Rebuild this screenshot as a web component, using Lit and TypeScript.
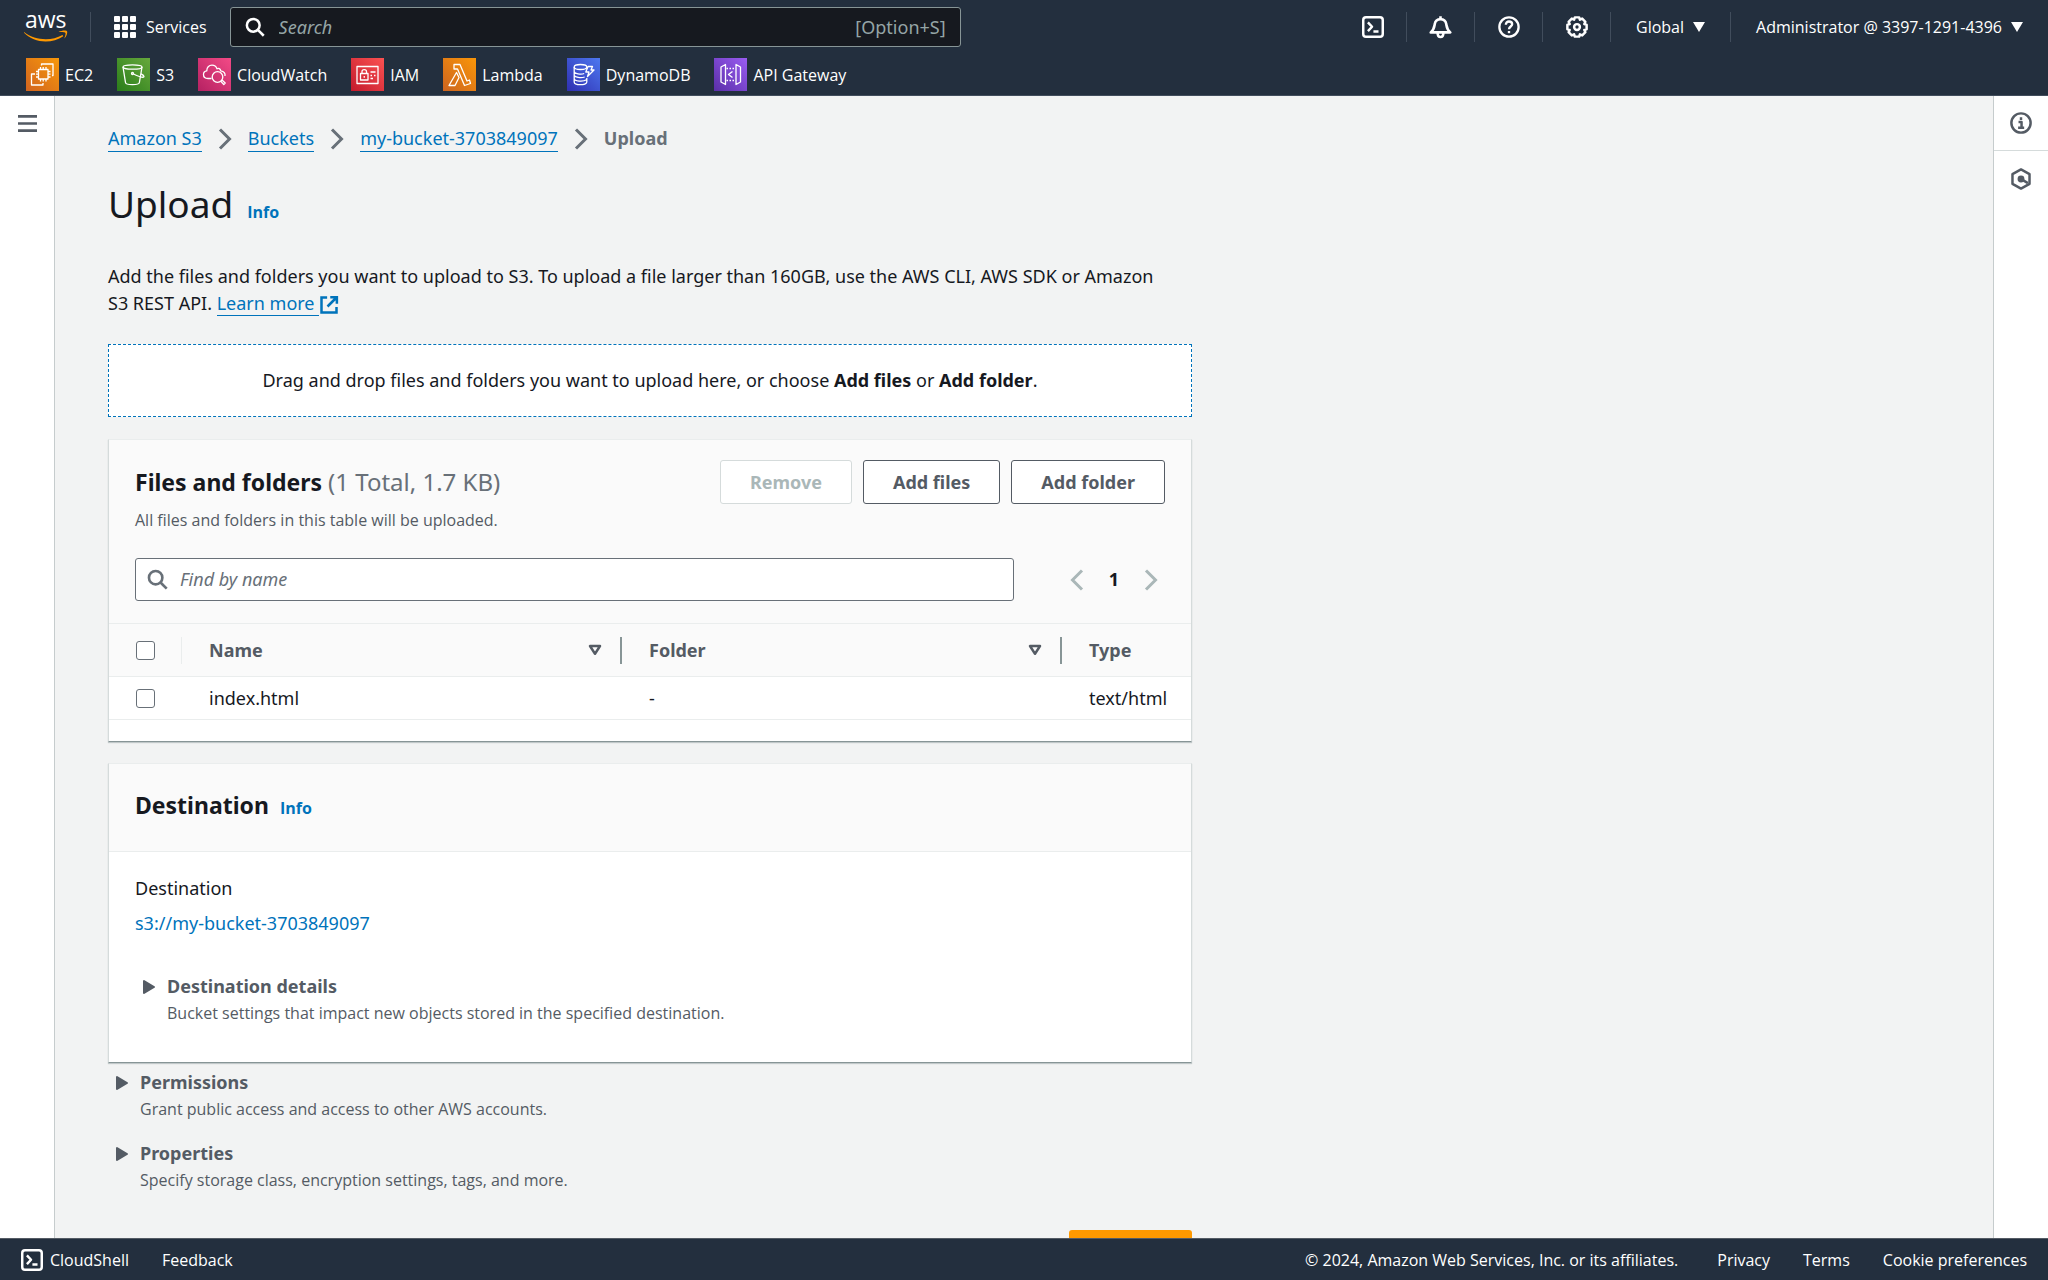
import { LitElement, html, css, svg } from "lit";
import { customElement, property } from "lit/decorators.js";

/* ---------- shared styles ---------- */

const base = css`
  :host {
    display: block;
    box-sizing: border-box;
  }
  *,
  *::before,
  *::after {
    box-sizing: border-box;
  }
  button,
  input {
    font: inherit;
    color: inherit;
    margin: 0;
  }
  button {
    background: none;
    border: 0;
    padding: 0;
    cursor: pointer;
  }
  a {
    color: #0073bb;
    text-decoration: none;
  }
  svg {
    display: block;
    flex: none;
  }
  h1,
  h2,
  p {
    margin: 0;
  }
  .small {
    font-family: "Open Sans", "Noto Sans", sans-serif;
    font-size: 16px;
  }
`;

/* ---------- icons ---------- */

const stroke = (size: number, body: unknown, width = 2) => html`
  <svg width=${size} height=${size} viewBox="0 0 16 16" fill="none" stroke="currentColor" stroke-width=${width}
    stroke-linejoin="round" aria-hidden="true">${body}</svg>
`;

const icons = {
  search: (size: number) => stroke(size, svg`<circle cx="6.6" cy="6.6" r="5.1"/><path d="M10.3 10.3 15 15"/>`),
  shell: (size: number) =>
    stroke(size, svg`<rect x=".9" y=".9" width="14.2" height="14.2" rx="2"/><path d="M4.3 4.6 7.3 7.8 4.3 11M8.3 11.2H12"/>`, 1.8),
  bell: (size: number) =>
    stroke(size, svg`<path d="M1.2 11.4C3.6 9.4 3.6 8 4 5.6 4.4 3.2 6 2.3 8 2.3s3.6.9 4 3.3c.4 2.4.4 3.8 2.8 5.8z"/><path d="M8 .2v2.2M6 11.6c0 2.2.8 3 2 3s2-.8 2-3"/>`, 1.8),
  help: (size: number) =>
    stroke(size, svg`<circle cx="8" cy="8" r="7"/><path d="M5.7 6.3C5.7 4.9 6.7 4 8 4s2.3.8 2.3 2c0 1.6-2.3 1.7-2.3 3.6"/><path d="M8 10.9v1.6"/>`, 1.7),
  gear: (size: number) =>
    stroke(size, svg`<path d="M6.4 1h3.2l.5 1.7 1.7-.8 2.3 2.3-.8 1.7 1.7.5v3.2l-1.7.5.8 1.7-2.3 2.3-1.7-.8L9.6 15H6.4l-.5-1.7-1.7.8-2.3-2.3.8-1.7L1 9.6V6.4l1.7-.5-.8-1.7 2.3-2.3 1.7.8z"/><circle cx="8" cy="8" r="2.1"/>`, 1.8),
  info: (size: number) =>
    stroke(size, svg`<circle cx="8" cy="8" r="7"/><path d="M6.2 7.3H8.4V11.3M5.9 11.5H10.3M8 3.8v2"/>`, 1.8),
  hex: (size: number) =>
    stroke(size, svg`<path d="M8 1 14.2 4.5V11.5L8 15 1.8 11.5V4.5z"/><circle cx="8" cy="8" r="1.6" fill="currentColor"/><path d="M8.5 8.3 13 11"/>`, 1.8),
  external: (size: number) =>
    stroke(size, svg`<path d="M6.5 2H2V14H14V9.5M9 1.7H14.3V7M14 2 6.8 9.2" stroke-linejoin="miter"/>`, 2),
  menu: (size: number) => stroke(size, svg`<path d="M0 2H16M0 8H16M0 14H16"/>`, 2.2),
  grid: (size: number) => html`
    <svg width=${size} height=${size} viewBox="0 0 22 22" fill="currentColor" aria-hidden="true">
      ${[0, 8, 16].map((y) => [0, 8, 16].map((x) => svg`<rect x=${x} y=${y} width="6" height="6" rx="1"/>`))}
    </svg>
  `,
  chevron: (dir: "left" | "right") => html`
    <svg width="14" height="22" viewBox="0 0 14 22" fill="none" stroke="currentColor" stroke-width="3" aria-hidden="true">
      <path d=${dir === "right" ? "M2 1.5 11.5 11 2 20.5" : "M12 1.5 2.5 11 12 20.5"} />
    </svg>
  `,
  caretDown: () => html`
    <svg width="12" height="10" viewBox="0 0 12 10" fill="currentColor" aria-hidden="true"><path d="M0 0h12L6 10z" /></svg>
  `,
  caretRight: () => html`
    <svg width="12" height="16" viewBox="0 0 12 16" fill="currentColor" stroke="currentColor" stroke-width="2" stroke-linejoin="round" aria-hidden="true">
      <path d="M1 2v12l10-6z" />
    </svg>
  `,
  sort: () => html`
    <svg width="14" height="12" viewBox="0 0 14 12" fill="none" stroke="currentColor" stroke-width="2.5" stroke-linejoin="round" aria-hidden="true">
      <path d="M2 2h10L7 9.8z" />
    </svg>
  `,
};

const serviceArt: Record<string, { from: string; to: string; art: unknown }> = {
  ec2: {
    from: "#d2641f",
    to: "#f7980a",
    art: svg`<path d="M12.500 11.500h9.500v9.500H12.500zM14.5 9V11.500M17.2 9V11.500M20 9V11.500M14.5 21v2.500M17.2 21v2.500M20 21v2.500M10 13.500H12.500M10 16.200H12.500M10 19H12.500M22 13.500h2.500M22 16.200h2.500M22 19h2.500"/><path d="M15.500 7.500V6H27V17.500H26M9 16H5.500V27H17V25"/>`,
  },
  s3: {
    from: "#2a7d1a",
    to: "#66a83c",
    art: svg`<ellipse cx="15.5" cy="9" rx="9.5" ry="2.2"/><path d="M6 9 8.5 24.5C8.8 27.3 22 27.3 22.4 24.5L25 9"/><circle cx="15.5" cy="15.5" r="1"/><path d="M16.5 16C20 18 27 20.5 27 18.5 27 17.3 25 16.4 23.8 15.8"/>`,
  },
  cloudwatch: {
    from: "#b52162",
    to: "#f34a86",
    art: svg`<path d="M13.5 20.5H10C7 20.5 5.5 18.5 5.5 16.5 5.5 14.5 7 13 8.8 12.8 8.6 9.5 11 7.2 14 7.2 16.5 7.2 18.3 8.8 19 10.8 20.3 9.8 22.5 10.5 22.7 12.8 25.5 13.3 27.5 15 27 18"/><circle cx="19.5" cy="19" r="5.3"/><path d="M22.8 23.3 25.8 26.6 27.2 25 24 22"/>`,
  },
  iam: {
    from: "#c31a2c",
    to: "#fb5252",
    art: svg`<path d="M6 8.5H27V25.5H6zM9.5 15.5h7.5v6.5H9.5zM11 15.5V13.5C11 11 15.5 11 15.5 13.5V15.5M13.25 18v1.7M19.5 14h5M19.5 17.5h1.5M23 17.5h1.5M19.5 20.5h2.5"/>`,
  },
  lambda: {
    from: "#cc6420",
    to: "#fa9608",
    art: svg`<path d="M11 6.5H17L24 23 26.5 22 27.5 25.5 21.5 27.5 14.5 11H11zM13.5 14.5 16 19.5 12 27.5H6z"/>`,
  },
  dynamo: {
    from: "#2f2fb0",
    to: "#4d78f0",
    art: svg`<ellipse cx="13.5" cy="9" rx="6.3" ry="2.5"/><path d="M7.2 9v15c0 3.6 12.6 3.6 12.6 0V20M7.2 13.5c0 2.5 7 3.2 10 2M7.2 17c0 2.5 7 3.2 10.5 2M7.2 20.5c0 3 9 3.5 12.3 1.3M21 8.5H25.5L24 12H27L20.5 18.5 22 14H18.8z"/>`,
  },
  api: {
    from: "#5a2fa8",
    to: "#9a5cf2",
    art: svg`<path d="M11.5 6.5V26.5L7 24V9zM22 6.5V26.5L26.5 24V9z"/><path d="M12.5 10.5H21M12.5 22.5H21" stroke-dasharray="1.5 1.5"/><path d="M18.5 13.5 14.5 16.5 18.5 19.5"/>`,
  },
};

const favourites = [
  { id: "ec2", name: "EC2" },
  { id: "s3", name: "S3" },
  { id: "cloudwatch", name: "CloudWatch" },
  { id: "iam", name: "IAM" },
  { id: "lambda", name: "Lambda" },
  { id: "dynamo", name: "DynamoDB" },
  { id: "api", name: "API Gateway" },
];

/* ---------- top navigation ---------- */

@customElement("top-nav")
export class TopNav extends LitElement {
  static styles = [
    base,
    css`
      :host {
        background: #232f3e;
        color: #fff;
        font-family: "Open Sans", "Noto Sans", sans-serif;
        font-size: 16px;
        line-height: 20px;
        border-bottom: 1px solid #414d5c;
      }
      .bar {
        display: flex;
        align-items: center;
        height: 54px;
        padding: 0 25px 0 24px;
      }
      .logo {
        padding-right: 22px;
      }
      .logo-art {
        overflow: visible;
      }
      .logo-text {
        font-size: 23px;
      }
      .rule {
        width: 1px;
        height: 30px;
        background: #414d5c;
        flex: none;
      }
      .services {
        display: flex;
        align-items: center;
        gap: 10px;
        padding: 0 23px;
      }
      .search {
        display: flex;
        align-items: center;
        gap: 14px;
        flex: 0 1 731px;
        min-width: 200px;
        height: 40px;
        padding: 0 14px;
        background: #16191f;
        border: 1px solid #879596;
        border-radius: 3px;
        font-family: "Noto Sans", "Open Sans", sans-serif;
        font-size: 18px;
      }
      .search-input {
        flex: 1;
        min-width: 0;
        background: none;
        border: 0;
        outline: 0;
        padding: 0;
      }
      .search-input::placeholder {
        color: #95a5a6;
        font-style: italic;
        opacity: 1;
      }
      .hint {
        color: #95a5a6;
      }
      .tools {
        display: flex;
        align-items: center;
        margin-left: auto;
      }
      .tool {
        display: flex;
        justify-content: center;
        width: 67px;
      }
      .menu {
        display: flex;
        align-items: center;
        gap: 9px;
        padding: 0 25px;
        white-space: nowrap;
      }
      .menu-last {
        padding-right: 0;
      }
      .favourites {
        display: flex;
        gap: 24px;
        height: 41px;
        padding: 4px 26px;
      }
      .favourite {
        display: flex;
        align-items: center;
        gap: 6px;
        height: 33px;
        color: #fff;
        white-space: nowrap;
      }
    `,
  ];

  render() {
    return html`
      <nav class="bar" aria-label="Console">
        <a class="logo" href="#home" aria-label="AWS home">
          <svg class="logo-art" width="44" height="30" viewBox="0 0 44 30">
            <text class="logo-text" x="1" y="16" fill="#fff">aws</text>
            <path d="M0 20C11 28.5 27 29.5 38.5 23L39.3 24.3C28 32 10 31.5 0 20.8z" fill="#f90" />
            <path d="M34.5 20C37.5 18.5 42 18 43 19.2 43.8 20.5 42.5 24.5 40.3 26.5 41.2 24 42 21.5 41.3 20.8 40.5 20 37 20.2 34.5 20z" fill="#f90" />
          </svg>
        </a>
        <span class="rule"></span>
        <button class="services">${icons.grid(22)} Services</button>
        <div class="search">
          ${icons.search(20)}
          <input class="search-input" type="search" aria-label="Search" placeholder="Search" />
          <span class="hint">[Option+S]</span>
        </div>
        <div class="tools">
          <button class="tool" aria-label="CloudShell">${icons.shell(22)}</button>
          <span class="rule"></span>
          <button class="tool" aria-label="Notifications">${icons.bell(23)}</button>
          <span class="rule"></span>
          <button class="tool" aria-label="Help">${icons.help(22)}</button>
          <span class="rule"></span>
          <button class="tool" aria-label="Settings">${icons.gear(22)}</button>
          <span class="rule"></span>
          <button class="menu">Global ${icons.caretDown()}</button>
          <span class="rule"></span>
          <button class="menu menu-last">Administrator @ 3397-1291-4396 ${icons.caretDown()}</button>
        </div>
      </nav>
      <nav class="favourites" aria-label="Favorites">
        ${favourites.map(({ id, name }) => {
          const { from, to, art } = serviceArt[id];
          return html`
            <a class="favourite" href="#${id}">
              <svg width="33" height="33" viewBox="0 0 33 33" fill="none" stroke="#fff" stroke-width="1.3" stroke-linejoin="round" aria-hidden="true">
                <defs>
                  <linearGradient id="g-${id}" x1="0" y1="1" x2="1" y2="0">
                    <stop offset="0" stop-color=${from} />
                    <stop offset="1" stop-color=${to} />
                  </linearGradient>
                </defs>
                <rect width="33" height="33" fill="url(#g-${id})" stroke="none" />
                ${art}
              </svg>
              ${name}
            </a>
          `;
        })}
      </nav>
    `;
  }
}

/* ---------- expandable section ---------- */

@customElement("expand-section")
export class ExpandSection extends LitElement {
  @property() heading = "";
  @property() description = "";

  static styles = [
    base,
    css`
      .toggle {
        display: grid;
        grid-template-columns: 12px 1fr;
        column-gap: 12px;
        align-items: center;
        width: 100%;
        padding-left: 8px;
        text-align: left;
        color: #545b64;
      }
      .title {
        font-size: 18px;
        line-height: 27px;
        font-weight: 700;
      }
      .text {
        grid-column: 2;
        line-height: 27px;
      }
    `,
  ];

  render() {
    return html`
      <button class="toggle" aria-expanded="false">
        ${icons.caretRight()}
        <span class="title">${this.heading}</span>
        <span class="text small">${this.description}</span>
      </button>
    `;
  }
}

/* ---------- files table card ---------- */

interface FileRow {
  name: string;
  folder: string;
  type: string;
}

const files: FileRow[] = [{ name: "index.html", folder: "-", type: "text/html" }];

const card = css`
  .card {
    background: #fff;
    border: 1px solid #d5dbdb;
    border-top-color: #eaeded;
    border-bottom-color: #879596;
    box-shadow: 0 1px 1px rgba(0, 28, 36, 0.2);
  }
  .card-title {
    font-size: 23px;
    line-height: 30px;
    font-weight: 700;
  }
`;

@customElement("files-card")
export class FilesCard extends LitElement {
  static styles = [
    base,
    card,
    css`
      .card {
        padding-bottom: 21px;
      }
      .head {
        background: #fafafa;
        padding: 20px 26px 22px;
      }
      .top {
        display: flex;
        justify-content: space-between;
        align-items: center;
      }
      .count {
        color: #687078;
        font-size: 24px;
        font-weight: 400;
      }
      .actions {
        display: flex;
        gap: 11px;
      }
      .button {
        height: 44px;
        padding: 0 29px;
        background: #fff;
        border: 1px solid #545b64;
        border-radius: 3px;
        color: #545b64;
        font-weight: 700;
      }
      .button:disabled {
        border-color: #d5dbdb;
        color: #aab7b8;
      }
      .note {
        line-height: 22px;
        margin-top: 5px;
        color: #545b64;
      }
      .filter {
        display: flex;
        align-items: center;
        justify-content: space-between;
        gap: 56px;
        margin-top: 27px;
      }
      .find {
        display: flex;
        align-items: center;
        gap: 12px;
        flex: 1;
        height: 43px;
        padding: 0 11px;
        background: #fff;
        border: 1px solid #687078;
        border-radius: 3px;
        color: #687078;
      }
      .find-input {
        flex: 1;
        min-width: 0;
        border: 0;
        outline: 0;
        padding: 0;
        background: none;
      }
      .find-input::placeholder {
        color: #687078;
        font-style: italic;
        opacity: 1;
      }
      .pages {
        display: flex;
        align-items: center;
        gap: 25px;
        padding-right: 7px;
        color: #aab7b8;
      }
      .page {
        color: #16191f;
        font-weight: 700;
      }
      .table {
        width: 100%;
        border-collapse: collapse;
        table-layout: fixed;
        text-align: left;
      }
      .col-check {
        width: 73px;
      }
      .col-wide {
        width: 440px;
      }
      .cell-head {
        height: 53px;
        padding: 0;
        background: #fafafa;
        border: 1px solid #eaeded;
        border-width: 1px 0;
        color: #545b64;
        font-weight: 700;
      }
      .cell-inner {
        display: flex;
        align-items: center;
        justify-content: space-between;
        height: 27px;
        padding: 0 18px 0 27px;
        border-right: 2px solid #879596;
      }
      .inner-check {
        border-right: 1px solid #eaeded;
      }
      .inner-last {
        border-right: 0;
        padding-right: 0;
      }
      .cell {
        height: 43px;
        padding: 0 0 0 27px;
        border-bottom: 1px solid #eaeded;
        white-space: nowrap;
      }
      .check {
        appearance: none;
        display: block;
        width: 19px;
        height: 19px;
        background: #fff;
        border: 1px solid #687078;
        border-radius: 3px;
      }
    `,
  ];

  render() {
    return html`
      <section class="card">
        <header class="head">
          <div class="top">
            <h2 class="card-title">Files and folders <span class="count">(1 Total, 1.7 KB)</span></h2>
            <div class="actions">
              <button class="button" disabled>Remove</button>
              <button class="button">Add files</button>
              <button class="button">Add folder</button>
            </div>
          </div>
          <p class="note small">All files and folders in this table will be uploaded.</p>
          <div class="filter">
            <div class="find">
              ${icons.search(21)}
              <input class="find-input" type="search" aria-label="Find by name" placeholder="Find by name" />
            </div>
            <div class="pages">
              <button disabled aria-label="Previous page">${icons.chevron("left")}</button>
              <span class="page">1</span>
              <button disabled aria-label="Next page">${icons.chevron("right")}</button>
            </div>
          </div>
        </header>
        <table class="table">
          <colgroup>
            <col class="col-check" />
            <col class="col-wide" />
            <col class="col-wide" />
            <col />
          </colgroup>
          <thead>
            <tr>
              <th class="cell-head" scope="col">
                <div class="cell-inner inner-check"><input class="check" type="checkbox" aria-label="Select all" /></div>
              </th>
              <th class="cell-head" scope="col"><div class="cell-inner">Name ${icons.sort()}</div></th>
              <th class="cell-head" scope="col"><div class="cell-inner">Folder ${icons.sort()}</div></th>
              <th class="cell-head" scope="col"><div class="cell-inner inner-last">Type</div></th>
            </tr>
          </thead>
          <tbody>
            ${files.map(
              (f) => html`
                <tr>
                  <td class="cell"><input class="check" type="checkbox" aria-label="Select ${f.name}" /></td>
                  <td class="cell">${f.name}</td>
                  <td class="cell">${f.folder}</td>
                  <td class="cell">${f.type}</td>
                </tr>
              `,
            )}
          </tbody>
        </table>
      </section>
    `;
  }
}

/* ---------- destination card ---------- */

@customElement("destination-card")
export class DestinationCard extends LitElement {
  static styles = [
    base,
    card,
    css`
      .head {
        display: flex;
        align-items: baseline;
        gap: 11px;
        padding: 26px 26px 29px;
        background: #fafafa;
        border-bottom: 1px solid #eaeded;
      }
      .info {
        font-weight: 700;
      }
      .body {
        padding: 23px 26px 35px;
      }
      .label {
        margin-bottom: 8px;
      }
      .details {
        margin-top: 36px;
      }
    `,
  ];

  render() {
    return html`
      <section class="card">
        <header class="head">
          <h2 class="card-title">Destination</h2>
          <a class="info small" href="#destination-info">Info</a>
        </header>
        <div class="body">
          <p class="label">Destination</p>
          <a href="#bucket">s3://my-bucket-3703849097</a>
          <expand-section
            class="details"
            heading="Destination details"
            description="Bucket settings that impact new objects stored in the specified destination."
          ></expand-section>
        </div>
      </section>
    `;
  }
}

/* ---------- footer ---------- */

@customElement("console-footer")
export class ConsoleFooter extends LitElement {
  static styles = [
    base,
    css`
      :host {
        background: #232f3e;
        color: #fff;
        line-height: 20px;
        border-top: 1px solid #545b64;
      }
      .bar {
        display: flex;
        align-items: center;
        gap: 33px;
        height: 41px;
        padding: 0 21px;
      }
      .shell {
        display: flex;
        align-items: center;
        gap: 7px;
      }
      .legal {
        margin-left: auto;
        margin-right: 6px;
      }
      .link {
        color: #fff;
      }
    `,
  ];

  render() {
    return html`
      <footer class="bar small">
        <button class="shell">${icons.shell(22)} CloudShell</button>
        <button>Feedback</button>
        <span class="legal">© 2024, Amazon Web Services, Inc. or its affiliates.</span>
        <a class="link" href="#privacy">Privacy</a>
        <a class="link" href="#terms">Terms</a>
        <a class="link" href="#cookies">Cookie preferences</a>
      </footer>
    `;
  }
}

/* ---------- page ---------- */

@customElement("app-root")
export class AppRoot extends LitElement {
  static styles = [
    base,
    css`
      :host {
        display: flex;
        flex-direction: column;
        height: 100vh;
        overflow: hidden;
        background: #f2f3f3;
        color: #16191f;
        font-family: "Noto Sans", "Open Sans", sans-serif;
        font-size: 18px;
        line-height: 27px;
      }
      .middle {
        display: flex;
        flex: 1;
        min-height: 0;
      }
      .rail {
        width: 55px;
        flex: none;
        background: #fff;
        color: #545b64;
        border-right: 1px solid #c6cccd;
      }
      .rail-right {
        border-right: 0;
        border-left: 1px solid #c6cccd;
      }
      .rail-button {
        display: flex;
        align-items: center;
        justify-content: center;
        width: 100%;
        height: 55px;
      }
      .rail-right .rail-button:first-child {
        border-bottom: 1px solid #d5dbdb;
      }
      .main {
        flex: 1;
        overflow: hidden;
        padding: 29px 53px;
      }
      .column {
        max-width: 1084px;
      }
      .crumbs {
        display: flex;
        align-items: center;
        gap: 16px;
        color: #687078;
      }
      .crumb {
        line-height: 25px;
        border-bottom: 1px solid #0073bb;
      }
      .crumb-current {
        font-weight: 700;
      }
      .heading {
        display: flex;
        align-items: baseline;
        gap: 14px;
        margin-top: 28px;
      }
      .title {
        font-size: 37px;
        line-height: 48px;
        font-weight: 400;
      }
      .info {
        font-weight: 700;
      }
      .intro {
        margin-top: 35px;
        padding-right: 20px;
      }
      .learn {
        border-bottom: 1px solid #0073bb;
      }
      .external {
        display: inline-block;
        vertical-align: middle;
        color: #0073bb;
      }
      .drop {
        margin: 27px 0 22px;
        padding: 22px;
        text-align: center;
        background: #fff;
        border: 1px dashed #0073bb;
      }
      .destination {
        margin-top: 21px;
      }
      .permissions {
        margin-top: 6px;
      }
      .properties {
        margin-top: 17px;
      }
      .submit {
        display: flex;
        justify-content: flex-end;
        margin-top: 36px;
      }
      .primary {
        width: 123px;
        height: 44px;
        background: #ff9900;
        border-radius: 3px;
      }
    `,
  ];

  render() {
    return html`
      <top-nav></top-nav>
      <div class="middle">
        <aside class="rail">
          <button class="rail-button" aria-label="Open navigation">${icons.menu(19)}</button>
        </aside>
        <main class="main">
          <div class="column">
            <nav class="crumbs" aria-label="Breadcrumb">
              <a class="crumb" href="#s3">Amazon S3</a>
              ${icons.chevron("right")}
              <a class="crumb" href="#buckets">Buckets</a>
              ${icons.chevron("right")}
              <a class="crumb" href="#bucket">my-bucket-3703849097</a>
              ${icons.chevron("right")}
              <span class="crumb-current">Upload</span>
            </nav>
            <div class="heading">
              <h1 class="title">Upload</h1>
              <a class="info small" href="#upload-info">Info</a>
            </div>
            <p class="intro">
              Add the files and folders you want to upload to S3. To upload a file larger than 160GB, use the AWS CLI, AWS SDK
              or Amazon S3 REST API. <a class="learn" href="#learn-more">Learn more&nbsp;</a><span class="external">${icons.external(20)}</span>
            </p>
            <div class="drop">
              Drag and drop files and folders you want to upload here, or choose <b>Add files</b> or <b>Add folder</b>.
            </div>
            <files-card></files-card>
            <destination-card class="destination"></destination-card>
            <expand-section class="permissions" heading="Permissions" description="Grant public access and access to other AWS accounts."></expand-section>
            <expand-section class="properties" heading="Properties" description="Specify storage class, encryption settings, tags, and more."></expand-section>
            <div class="submit"><button class="primary" aria-label="Upload"></button></div>
          </div>
        </main>
        <aside class="rail rail-right">
          <button class="rail-button" aria-label="Info panel">${icons.info(22)}</button>
          <button class="rail-button" aria-label="Resources panel">${icons.hex(22)}</button>
        </aside>
      </div>
      <console-footer></console-footer>
    `;
  }
}
